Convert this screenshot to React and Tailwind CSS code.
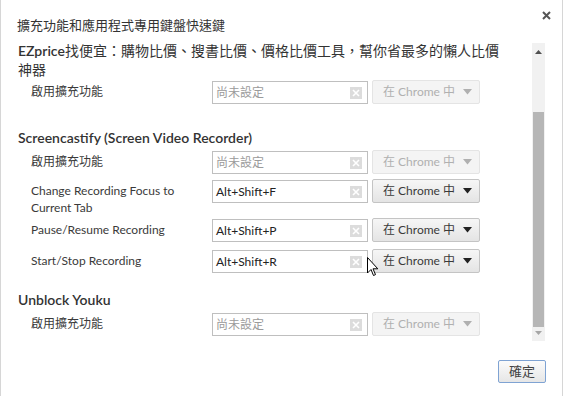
const FONT = { fontFamily: '"Lato", "Noto Sans CJK TC", sans-serif' };

const ClearBox = () => (
  <span className="absolute right-[5px] top-[5px] w-[12px] h-[12px] bg-[#dcdcdc] flex items-center justify-center">
    <svg width="8" height="8" viewBox="0 0 8 8">
      <path d="M1 1L7 7M7 1L1 7" stroke="#fff" strokeWidth="1.6" />
    </svg>
  </span>
);

const ShortcutInput = ({ value }) => (
  <div className="relative w-[156px] h-[23px] border border-[#bfbfbf] bg-white flex items-center pl-[3px] shrink-0">
    <span className={value ? "text-[12px] text-[#222]" : "text-[12px] text-[#9a9a9a]"}>
      {value || "尚未設定"}
    </span>
    <ClearBox />
  </div>
);

const ScopeSelect = ({ disabled }) => (
  <div
    className={
      disabled
        ? "ml-[4px] w-[108px] h-[24px] -mt-[1px] border border-[#e4e4e4] bg-[#f4f4f4] rounded-[2px] flex items-center pl-[10px] pr-[7px] text-[12px] text-[#b0b0b0]"
        : "ml-[4px] w-[108px] h-[24px] -mt-[1px] border border-[#c4c4c4] bg-gradient-to-b from-[#f6f6f6] to-[#e4e4e4] rounded-[2px] flex items-center pl-[10px] pr-[7px] text-[12px] text-[#3a3a3a]"
    }
  >
    <span className="flex-1">在 Chrome 中</span>
    <svg width="9" height="6" viewBox="0 0 9 6">
      <path d="M0 0H9L4.5 5.5Z" fill={disabled ? "#b0b0b0" : "#222"} />
    </svg>
  </div>
);

const Row = ({ label, value, disabled, mt, twoLine }) => (
  <div className={`flex items-start pl-[13px] ${mt}`}>
    <div
      className={
        twoLine
          ? "w-[181px] pt-[2px] leading-[17px] text-[12px] text-[#3a3a3a]"
          : "w-[181px] pt-[3px] leading-[16px] text-[12px] text-[#3a3a3a]"
      }
    >
      {label}
    </div>
    <ShortcutInput value={value} />
    <ScopeSelect disabled={disabled} />
  </div>
);

const Heading = ({ children, mt, w }) => (
  <div className={`text-[14px] font-semibold leading-[19px] text-[#333] ${mt} ${w}`}>{children}</div>
);

const Scrollbar = () => (
  <div className="w-[13px] mt-[2px] h-[298px] bg-[#f1f1f1] flex flex-col items-center">
    <div className="h-[16px] flex items-center justify-center pt-[2px]">
      <svg width="7" height="4" viewBox="0 0 7 4">
        <path d="M0 4H7L3.5 0Z" fill="#505050" />
      </svg>
    </div>
    <div className="mt-[53px] w-[11px] h-[215px] bg-[#b6b6b6]" />
    <div className="h-[12px] flex items-center justify-center">
      <svg width="7" height="4" viewBox="0 0 7 4">
        <path d="M0 0H7L3.5 4Z" fill="#a6a6a6" />
      </svg>
    </div>
  </div>
);

const Cursor = () => (
  <svg className="absolute left-[366px] top-[257px]" width="12" height="20" viewBox="0 0 12 20">
    <path d="M0.5 0.5V16L4 12.5L6.5 18.5L8.5 17.6L6 11.8H10.8Z" fill="#fff" stroke="#000" strokeWidth="1" strokeLinejoin="round" />
  </svg>
);

export default function App() {
  return (
    <div style={FONT} className="relative w-[563px] h-[396px] bg-white border-l border-r border-[#d6d6d6] overflow-hidden">
      {/* HEADER */}
      <div className="h-[41px] pl-[16px] pt-[16px] leading-[18px] text-[13px] text-[#333] relative">
        擴充功能和應用程式專用鍵盤快速鍵
        <svg className="absolute left-[541px] top-[11px]" width="9" height="9" viewBox="0 0 9 9">
          <path d="M1 1L8 8M8 1L1 8" stroke="#555" strokeWidth="2" />
        </svg>
      </div>

      {/* BODY */}
      <div className="flex">
        <div className="w-[530px] pl-[17px]">
          <Heading mt="" w="w-[490px]">
            EZprice<span className="font-normal">找便宜：購物比價、搜書比價、價格比價工具，幫你省最多的懶人比價神器</span>
          </Heading>
          <Row label="啟用擴充功能" disabled mt="mt-[2px]" />

          <Heading mt="mt-[24px]">Screencastify (Screen Video Recorder)</Heading>
          <Row label="啟用擴充功能" disabled mt="mt-[4px]" />
          <Row label="Change Recording Focus to Current Tab" value="Alt+Shift+F" twoLine mt="mt-[6px]" />
          <Row label="Pause/Resume Recording" value="Alt+Shift+P" mt="mt-[3px]" />
          <Row label="Start/Stop Recording" value="Alt+Shift+R" mt="mt-[8px]" />

          <Heading mt="mt-[17px]">Unblock Youku</Heading>
          <Row label="啟用擴充功能" disabled mt="mt-[4px]" />
        </div>
        <div className="ml-[1px]">
          <Scrollbar />
        </div>
      </div>

      {/* FOOTER */}
      <div className="absolute left-[497px] top-[358px]">
        <button className="w-[48px] h-[23px] border border-[#7fa3d3] rounded-[2px] bg-gradient-to-b from-[#fbfbfb] to-[#e6e6e6] text-[13px] text-[#444] leading-none">
          確定
        </button>
      </div>

      <Cursor />
    </div>
  );
}
